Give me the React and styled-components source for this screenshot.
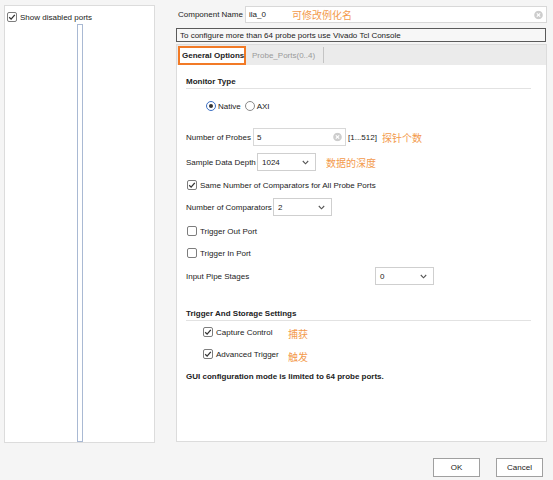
import React from "react";
import styled, { createGlobalStyle } from "styled-components";

const Global = createGlobalStyle`
  html, body { margin: 0; padding: 0; background: #f5f5f5; }
  body { font-family: "Liberation Sans", Arial, sans-serif; font-size: 8px; color: #222; }
  * { box-sizing: border-box; }
`;

const Page = styled.div`
  width: 553px;
  height: 480px;
  display: flex;
  flex-direction: column;
  background: #f5f5f5;
`;

const Main = styled.div`
  display: flex;
  padding: 5px 0 0 4px;
  height: 442px;
`;

const LeftPanel = styled.div`
  width: 151px;
  height: 438px;
  background: #fff;
  border: 1px solid #dcdcdc;
  display: flex;
  flex-direction: column;
  padding: 5px 0 0 2px;
`;

const Tree = styled.div`
  flex: 1;
  display: flex;
  justify-content: flex-start;
  padding: 1px 0 0 70px;
`;

const TreeBar = styled.div`
  width: 6px;
  height: 100%;
  border: 1px solid #a9b9d3;
  background: #fff;
`;

const RightCol = styled.div`
  margin-left: 21px;
  width: 371px;
  display: flex;
  flex-direction: column;
  align-items: stretch;
`;

const NameRow = styled.div`
  display: flex;
  align-items: center;
  height: 17px;
  margin-top: 1px;
  padding-left: 2px;
`;

const NameLabel = styled.span`
  width: 67px;
  white-space: nowrap;
`;

const TextBox = styled.div`
  position: relative;
  width: ${(p) => p.$w}px;
  height: ${(p) => p.$h || 17}px;
  border: 1px solid #d8d8d8;
  background: #fff;
  display: flex;
  align-items: center;
  padding-left: 3px;
  flex: none;
`;

const Note = styled.span`
  font-family: "Noto Sans CJK SC", sans-serif;
  font-size: 10px;
  color: #f39a4c;
  white-space: nowrap;
  margin-left: ${(p) => p.$ml || 0}px;
  margin-top: ${(p) => p.$mt || 0}px;
`;

const OverNote = styled(Note)`
  position: absolute;
  left: 46px;
  top: 1px;
  line-height: 14px;
`;

const ClearWrap = styled.span`
  position: absolute;
  right: 3px;
  top: 50%;
  transform: translateY(-50%);
  display: flex;
`;

const InfoBox = styled.div`
  margin-top: 5px;
  height: 14px;
  border: 1px solid #5a5a5a;
  background: #f7f7f7;
  display: flex;
  align-items: center;
  padding-left: 3px;
  margin-right: 1px;
  white-space: nowrap;
  flex: none;
`;

const TabPanel = styled.div`
  margin-top: 2px;
  height: 400px;
  border: 1px solid #dcdcdc;
  background: #fff;
  display: flex;
  flex-direction: column;
`;

const TabBar = styled.div`
  height: 20px;
  background: #ebebeb;
  display: flex;
  align-items: center;
  padding-left: 1px;
`;

const ActiveTab = styled.div`
  width: 68px;
  height: 19px;
  border: 2.5px solid #f27a26;
  background: #fff;
  font-weight: bold;
  display: flex;
  align-items: center;
  padding-left: 2px;
  white-space: nowrap;
`;

const Tab = styled.div`
  height: 16px;
  padding: 0 8px 0 6px;
  color: #9a9a9a;
  display: flex;
  align-items: center;
  border-right: 1px solid #c4c4c4;
  white-space: nowrap;
`;

const Content = styled.div`
  display: flex;
  flex-direction: column;
  padding-left: 9px;
`;

const SectionTitle = styled.div`
  margin-top: ${(p) => p.$mt}px;
  margin-right: 15px;
  height: 14px;
  line-height: 13px;
  font-weight: bold;
  border-bottom: 1px solid #e2e2e2;
`;

const Row = styled.div`
  margin-top: ${(p) => p.$mt}px;
  padding-left: ${(p) => p.$indent || 0}px;
  height: 18px;
  display: flex;
  align-items: center;
  white-space: nowrap;
`;

const TopRow = styled(Row)`
  height: 12px;
`;

const Label = styled.span`
  width: ${(p) => p.$w}px;
  flex: none;
`;

const Range = styled.span`
  margin-left: 2px;
`;

const BoldText = styled.span`
  font-weight: bold;
`;

const Select = styled.div`
  width: ${(p) => p.$w || 59}px;
  height: 18px;
  border: 1px solid #cfcfcf;
  background: #fff;
  display: flex;
  align-items: center;
  justify-content: space-between;
  padding: 0 6px 0 4px;
`;

const Box = styled.span`
  width: 10px;
  height: 10px;
  border: 1px solid #7d7d7d;
  border-radius: 2px;
  background: #fff;
  display: inline-flex;
  align-items: center;
  justify-content: center;
  margin-right: ${(p) => p.$mr || 3}px;
  flex: none;
`;

const Radio = styled.span`
  width: 10px;
  height: 10px;
  border-radius: 50%;
  border: 1px solid ${(p) => (p.$on ? "#3b6fc4" : "#8a8a8a")};
  background: #fff;
  display: inline-flex;
  align-items: center;
  justify-content: center;
  margin-right: 2px;
  flex: none;
  &::after {
    content: "";
    width: 4px;
    height: 4px;
    border-radius: 50%;
    background: ${(p) => (p.$on ? "#333" : "transparent")};
  }
`;

const RadioItem = styled.span`
  display: inline-flex;
  align-items: center;
  margin-right: ${(p) => p.$mr || 0}px;
`;

const Footer = styled.div`
  display: flex;
  justify-content: flex-end;
  gap: 16px;
  padding: 16px 10px 0 0;
`;

const Button = styled.button`
  width: 47px;
  height: 19px;
  border: 1px solid #a0a0a0;
  background: #fff;
  font-family: "Liberation Sans", Arial, sans-serif;
  font-size: 8px;
  color: #222;
  padding: 0;
`;

const CheckMark = () => (
  <svg width="8" height="8" viewBox="0 0 8 8">
    <polyline points="1.2,4.2 3.1,6.1 6.8,1.8" fill="none" stroke="#333" strokeWidth="1.3" />
  </svg>
);

const Check = ({ on, mr }) => <Box $mr={mr}>{on && <CheckMark />}</Box>;

const ClearIcon = () => (
  <ClearWrap>
    <svg width="9" height="9" viewBox="0 0 9 9">
      <circle cx="4.5" cy="4.5" r="4.3" fill="#cdcdcd" />
      <path d="M2.8 2.8 L6.2 6.2 M6.2 2.8 L2.8 6.2" stroke="#fff" strokeWidth="1.2" />
    </svg>
  </ClearWrap>
);

const Chevron = () => (
  <svg width="7" height="5" viewBox="0 0 7 5">
    <polyline points="0.8,1 3.5,3.8 6.2,1" fill="none" stroke="#555" strokeWidth="1.1" />
  </svg>
);

export default function App() {
  return (
    <Page>
      <Global />
      <Main>
        <LeftPanel>
          <TopRow $mt={0}>
            <Check on mr={3} />
            Show disabled ports
          </TopRow>
          <Tree>
            <TreeBar />
          </Tree>
        </LeftPanel>
        <RightCol>
          <NameRow>
            <NameLabel>Component Name</NameLabel>
            <TextBox $w={302} $h={17}>
              ila_0
              <OverNote>可修改例化名</OverNote>
              <ClearIcon />
            </TextBox>
          </NameRow>
          <InfoBox>To configure more than 64 probe ports use Vivado Tcl Console</InfoBox>
          <TabPanel>
            <TabBar>
              <ActiveTab>General Options</ActiveTab>
              <Tab>Probe_Ports(0..4)</Tab>
            </TabBar>
            <Content>
              <SectionTitle $mt={10}>Monitor Type</SectionTitle>
              <Row $mt={8} $indent={20}>
                <RadioItem $mr={4}>
                  <Radio $on />
                  Native
                </RadioItem>
                <RadioItem>
                  <Radio />
                  AXI
                </RadioItem>
              </Row>
              <Row $mt={13}>
                <Label $w={67}>Number of Probes</Label>
                <TextBox $w={93} $h={18}>
                  5
                  <ClearIcon />
                </TextBox>
                <Range>[1...512]</Range>
                <Note $ml={5}>探针个数</Note>
              </Row>
              <Row $mt={7}>
                <Label $w={71}>Sample Data Depth</Label>
                <Select>
                  1024
                  <Chevron />
                </Select>
                <Note $ml={10}>数据的深度</Note>
              </Row>
              <Row $mt={5} $indent={1}>
                <Check on />
                Same Number of Comparators for All Probe Ports
              </Row>
              <Row $mt={4}>
                <Label $w={87}>Number of Comparators</Label>
                <Select>
                  2
                  <Chevron />
                </Select>
              </Row>
              <Row $mt={6} $indent={1}>
                <Check />
                Trigger Out Port
              </Row>
              <Row $mt={4} $indent={1}>
                <Check />
                Trigger In Port
              </Row>
              <Row $mt={5}>
                <Label $w={189}>Input Pipe Stages</Label>
                <Select>
                  0
                  <Chevron />
                </Select>
              </Row>
              <SectionTitle $mt={22}>Trigger And Storage Settings</SectionTitle>
              <Row $mt={2} $indent={17}>
                <Check on />
                <Label $w={72}>Capture Control</Label>
                <Note $mt={3}>捕获</Note>
              </Row>
              <Row $mt={4} $indent={17}>
                <Check on />
                <Label $w={72}>Advanced Trigger</Label>
                <Note $mt={5}>触发</Note>
              </Row>
              <Row $mt={4}>
                <BoldText>GUI configuration mode is limited to 64 probe ports.</BoldText>
              </Row>
            </Content>
          </TabPanel>
        </RightCol>
      </Main>
      <Footer>
        <Button>OK</Button>
        <Button>Cancel</Button>
      </Footer>
    </Page>
  );
}
